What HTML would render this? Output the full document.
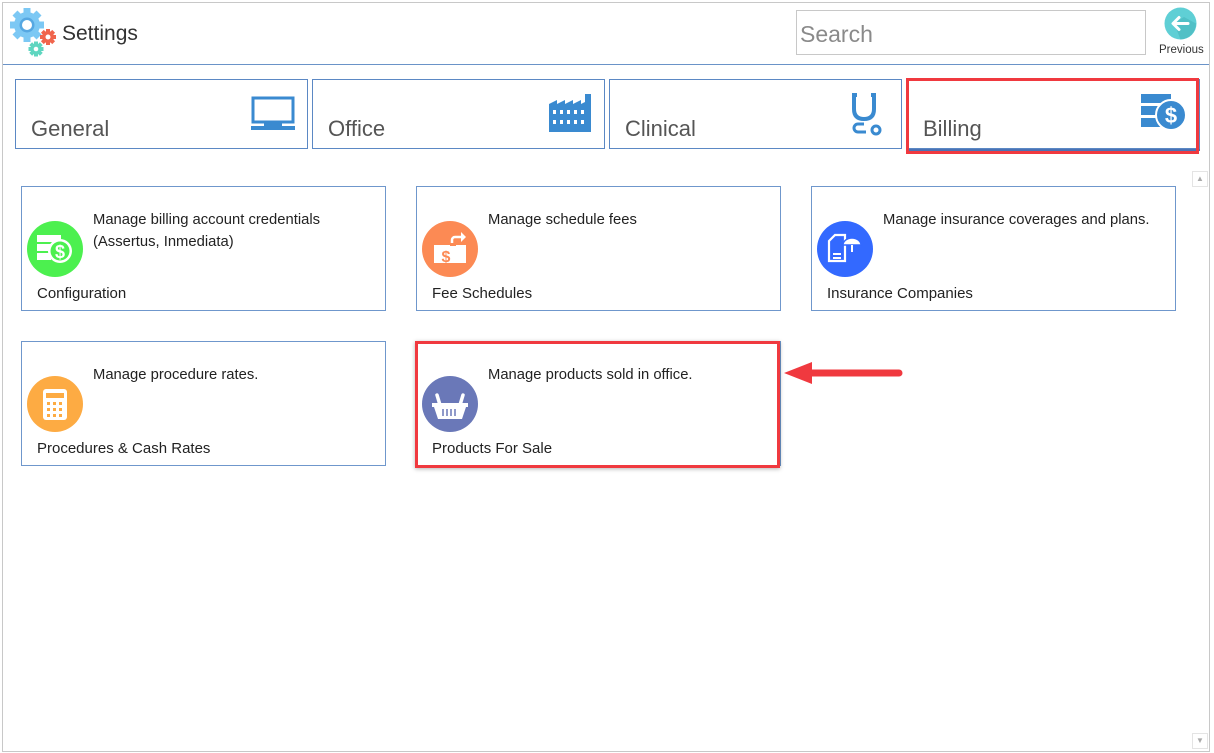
<!DOCTYPE html>
<html><head><meta charset="utf-8"><style>
*{box-sizing:border-box;margin:0;padding:0}
body{width:1214px;height:753px;background:#fff;font-family:"Liberation Sans",sans-serif;color:#333;position:relative;overflow:hidden}
.abs{position:absolute}
.win{left:2px;top:2px;width:1208px;height:750px;border:1px solid #c8c8c8;border-top:1px solid #c8c8c8}
.hdrline{left:3px;top:64px;width:1206px;height:1px;background:#6a93c8}
.tile{position:absolute;top:79px;height:70px;width:293px;border:1px solid #5b88c4;background:#fff}
.tile span{position:absolute;left:15px;top:36px;font-size:22px;color:#555;letter-spacing:0}
.tile svg{position:absolute}
.card{position:absolute;width:365px;height:125px;border:1px solid #6f97cc;background:#fff}
.card .d{position:absolute;left:71px;top:22px;font-size:14.8px;line-height:22px;color:#222}
.card .t{position:absolute;left:15px;top:98px;font-size:15px;color:#222}
.card .c{position:absolute;left:5px;top:34px;width:56px;height:56px;border-radius:50%}
.card .c svg{position:absolute;left:0;top:0}
.red{position:absolute;border:3px solid #f0393f}
</style></head><body>
<div class="abs win"></div>
<!-- logo -->
<svg class="abs" style="left:6px;top:6px" width="54" height="52" viewBox="0 0 54 52">
<g fill="#7cc8f4"><circle cx="21" cy="19" r="13"/>
<g transform="translate(21 19)"><rect x="-3.5" y="-17" width="7" height="34"/><rect x="-17" y="-3.5" width="34" height="7"/><rect x="-3.5" y="-17" width="7" height="34" transform="rotate(45)"/><rect x="-3.5" y="-17" width="7" height="34" transform="rotate(-45)"/></g></g>
<circle cx="21" cy="19" r="7.5" fill="#56a8e2"/><circle cx="21" cy="19" r="5" fill="#fff"/>
<g fill="#f0654d" transform="translate(42 31)"><circle r="6"/><rect x="-2" y="-8" width="4" height="16"/><rect x="-8" y="-2" width="16" height="4"/><rect x="-2" y="-8" width="4" height="16" transform="rotate(45)"/><rect x="-2" y="-8" width="4" height="16" transform="rotate(-45)"/><circle r="2.5" fill="#fff"/></g>
<g fill="#5fd6c0" transform="translate(30 43)"><circle r="5.5"/><rect x="-2" y="-7.5" width="4" height="15"/><rect x="-7.5" y="-2" width="15" height="4"/><rect x="-2" y="-7.5" width="4" height="15" transform="rotate(45)"/><rect x="-2" y="-7.5" width="4" height="15" transform="rotate(-45)"/><circle r="2.3" fill="#fff"/></g>
</svg>
<div class="abs" style="left:62px;top:22px;font-size:21px;color:#333">Settings</div>
<div class="abs" style="left:796px;top:10px;width:350px;height:45px;border:1px solid #c8c8c8"></div>
<div class="abs" style="left:800px;top:21px;font-size:23px;color:#8a8a8a">Search</div>
<svg class="abs" style="left:1164px;top:7px" width="33" height="33" viewBox="0 0 33 33"><circle cx="16.5" cy="16.5" r="16" fill="#5fcfd5"/><path d="M16.5 32.5A16 16 0 0 0 32 16.5L20 10 10 16z" fill="#47b6bd" opacity=".6"/><path d="M24 16.5H10M15 10.5l-6 6 6 6" stroke="#fff" stroke-width="3" fill="none" stroke-linecap="round" stroke-linejoin="round"/></svg>
<div class="abs" style="left:1159px;top:44px;font-size:11.5px;color:#333">Previous</div>
<div class="abs hdrline"></div>

<div class="tile" style="left:15px"><span>General</span>
<svg style="left:235px;top:16px" width="44" height="36" viewBox="0 0 44 36"><rect x="2" y="2" width="40" height="24" fill="none" stroke="#3a8ad0" stroke-width="3"/><rect x="13" y="26" width="18" height="4" fill="#3a8ad0"/><rect x="0" y="30" width="44" height="4" fill="#3a8ad0"/></svg></div>
<div class="tile" style="left:312px"><span>Office</span>
<svg style="left:236px;top:14px" width="44" height="38" viewBox="0 0 44 38"><path d="M0 10l8-4v4l8-4v4l8-4v4l8-4v4l4-2V0h6v38H0z" fill="#3a8ad0"/><g fill="#fff"><rect x="4" y="16" width="3" height="4"/><rect x="11" y="16" width="3" height="4"/><rect x="18" y="16" width="3" height="4"/><rect x="25" y="16" width="3" height="4"/><rect x="32" y="16" width="3" height="4"/><rect x="4" y="26" width="3" height="4"/><rect x="11" y="26" width="3" height="4"/><rect x="18" y="26" width="3" height="4"/><rect x="25" y="26" width="3" height="4"/><rect x="32" y="26" width="3" height="4"/></g></svg></div>
<div class="tile" style="left:609px"><span>Clinical</span>
<svg style="left:240px;top:12px" width="34" height="46" viewBox="0 0 34 46"><path d="M7 3H4v14q0 10 10 10t10-10V3h-3" fill="none" stroke="#3a8ad0" stroke-width="4"/><path d="M16 40h-8a4 4 0 0 1 0-8h6" fill="none" stroke="#3a8ad0" stroke-width="3"/><circle cx="26" cy="38" r="4" fill="none" stroke="#3a8ad0" stroke-width="3"/></svg></div>
<div class="tile" style="left:907px;box-shadow:0 2px 0 #4a73b5"><span>Billing</span>
<svg style="left:233px;top:14px" width="46" height="40" viewBox="0 0 46 40"><g fill="#3a8ad0"><rect x="0" y="0" width="30" height="9"/><rect x="0" y="12" width="22" height="9"/><rect x="0" y="24" width="22" height="9"/><circle cx="30" cy="21" r="15" stroke="#fff" stroke-width="2"/></g><text x="30" y="29" font-size="22" font-weight="bold" fill="#fff" text-anchor="middle" font-family="Liberation Sans">$</text></svg></div>
<div class="red" style="left:906px;top:78px;width:293px;height:76px"></div>

<!-- scrollbar -->
<div class="abs" style="left:1192px;top:171px;width:16px;height:16px;border:1px solid #e4e4e4;font-size:8px;color:#aaa;text-align:center;line-height:14px">▲</div>
<div class="abs" style="left:1192px;top:733px;width:16px;height:16px;border:1px solid #e4e4e4;font-size:8px;color:#aaa;text-align:center;line-height:14px">▼</div>

<div class="card" style="left:21px;top:186px"><div class="c" style="background:#4cf04f"><svg width="56" height="56" viewBox="0 0 56 56"><g fill="#fff"><rect x="10" y="14" width="24" height="7"/><rect x="10" y="23" width="14" height="7"/><rect x="10" y="32" width="14" height="7"/><circle cx="33" cy="30" r="12"/></g><circle cx="33" cy="30" r="9.5" fill="#4cf04f"/><text x="33" y="37" font-size="18" font-weight="bold" fill="#fff" text-anchor="middle" font-family="Liberation Sans">$</text></svg></div>
<div class="d">Manage billing account credentials<br>(Assertus, Inmediata)</div><div class="t">Configuration</div></div>
<div class="card" style="left:416px;top:186px"><div class="c" style="background:#fc8a54"><svg width="56" height="56" viewBox="0 0 56 56"><rect x="12" y="24" width="32" height="18" fill="#fff"/><text x="24" y="41" font-size="16" font-weight="bold" fill="#fc8a54" text-anchor="middle" font-family="Liberation Sans">$</text><path d="M30 24v-5a3 3 0 0 1 3-3h8" stroke="#fff" stroke-width="2.5" fill="none"/><path d="M39 11l5 5-5 5z" fill="#fff"/><rect x="28" y="22" width="6" height="3" fill="#fc8a54"/></svg></div>
<div class="d">Manage schedule fees</div><div class="t">Fee Schedules</div></div>
<div class="card" style="left:811px;top:186px"><div class="c" style="background:#3369ff"><svg width="56" height="56" viewBox="0 0 56 56"><path d="M12 20l6-6h10v26H12z" fill="none" stroke="#fff" stroke-width="2.2"/><line x1="16" y1="33" x2="24" y2="33" stroke="#fff" stroke-width="2"/><line x1="16" y1="37" x2="24" y2="37" stroke="#fff" stroke-width="2"/><path d="M26 24a9 7 0 0 1 18 0z" fill="#fff" stroke="#3369ff" stroke-width="1.5"/><path d="M35 24v7" stroke="#fff" stroke-width="2"/></svg></div>
<div class="d">Manage insurance coverages and plans.</div><div class="t">Insurance Companies</div></div>
<div class="card" style="left:21px;top:341px"><div class="c" style="background:#fdab43"><svg width="56" height="56" viewBox="0 0 56 56"><rect x="16" y="13" width="24" height="31" rx="3" fill="#fff"/><rect x="19" y="17" width="18" height="5" fill="#fdab43"/><g fill="#fdab43"><rect x="20" y="26" width="3" height="3"/><rect x="26" y="26" width="3" height="3"/><rect x="32" y="26" width="3" height="3"/><rect x="20" y="32" width="3" height="3"/><rect x="26" y="32" width="3" height="3"/><rect x="32" y="32" width="3" height="3"/><rect x="20" y="38" width="3" height="3"/><rect x="26" y="38" width="3" height="3"/><rect x="32" y="38" width="3" height="3"/></g></svg></div>
<div class="d">Manage procedure rates.</div><div class="t">Procedures &amp; Cash Rates</div></div>
<div class="card" style="left:416px;top:341px"><div class="c" style="background:#6a78b8"><svg width="56" height="56" viewBox="0 0 56 56"><path d="M18 29l-3-10M38 29l3-10" stroke="#fff" stroke-width="3.5" stroke-linecap="round"/><rect x="10" y="27" width="36" height="4" fill="#fff"/><path d="M12 31h32l-4 12H16z" fill="#fff"/><g stroke="#6a78b8" stroke-width="1.5"><line x1="21" y1="33" x2="21" y2="40"/><line x1="25" y1="33" x2="25" y2="40"/><line x1="29" y1="33" x2="29" y2="40"/><line x1="33" y1="33" x2="33" y2="40"/></g></svg></div>
<div class="d">Manage products sold in office.</div><div class="t">Products For Sale</div></div>
<div class="red" style="left:415px;top:341px;width:365px;height:127px;box-shadow:0 1px 4px rgba(0,0,0,.3)"></div>

<!-- arrow -->
<svg class="abs" style="left:780px;top:358px" width="126" height="32" viewBox="0 0 126 32"><path d="M30 15H119" stroke="#f0393f" stroke-width="7" stroke-linecap="round"/><path d="M4 15L32 4v22z" fill="#f0393f"/></svg>
</body></html>
